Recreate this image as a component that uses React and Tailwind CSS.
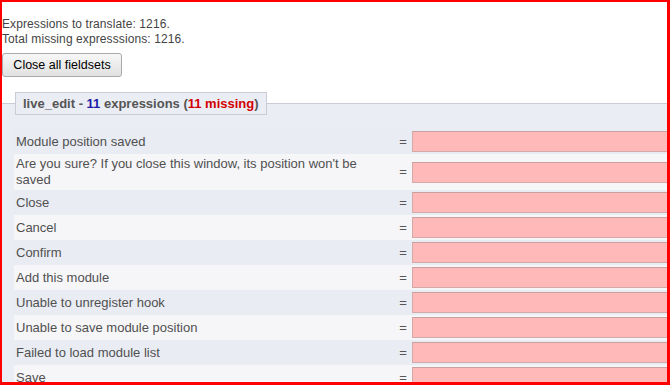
import React from 'react';

const rows = [
  'Module position saved',
  "Are you sure? If you close this window, its position won't be saved",
  'Close',
  'Cancel',
  'Confirm',
  'Add this module',
  'Unable to unregister hook',
  'Unable to save module position',
  'Failed to load module list',
  'Save',
];

export default function App() {
  return (
    <div className="w-[670px] h-[385px] overflow-hidden bg-white border-t-2 border-l-2 border-r-[3px] border-b-[3px] border-[#ff0000] font-['Liberation_Sans',Arial,sans-serif] text-[12px]">
      <div className="pt-[15px] leading-[15px] tracking-[0.1px] text-[#444]">
        <p>Expressions to translate: 1216.</p>
        <p>Total missing expresssions: 1216.</p>
      </div>

      <button className="mt-[6px] h-[24px] w-[120px] rounded-[3px] border border-[#a9a9a9] bg-gradient-to-b from-[#f7f7f7] to-[#e1e1e1] text-[12.5px] text-black">
        Close all fieldsets
      </button>

      <fieldset className="mt-[15px] border-t border-[#c9ccd6] bg-[#eaedf4] pl-[12px] pb-[20px]">
        <legend className="ml-[1px] h-[23px] border border-[#c9ccd6] bg-[#eaedf4] px-[7px] text-[13px] font-bold leading-[21px] text-[#555]">
          live_edit - <span className="text-[#1c1ca8]">11</span> expressions (
          <span className="text-[#d30000]">11 missing</span>)
        </legend>

        <div className="mt-[14px]">
          {rows.map((label, i) => (
            <div
              key={label}
              className={
                'flex items-center py-[2px] min-h-[25px] ' +
                (i % 2 === 1 ? 'bg-[#f6f6f8]' : 'bg-[#e9ecf3]')
              }
            >
              <div className="w-[380px] shrink-0 pl-[2px] pr-[16px] text-[13px] leading-[16px] text-[#505050]">{label}</div>
              <div className="w-[18px] shrink-0 text-center text-[13px] text-[#555]">=</div>
              <div className="h-[21px] w-[280px] shrink-0 border border-[#d2aaaa] border-t-[#c9a0a0] bg-[#ffb9b9]" />
            </div>
          ))}
        </div>
      </fieldset>
    </div>
  );
}
